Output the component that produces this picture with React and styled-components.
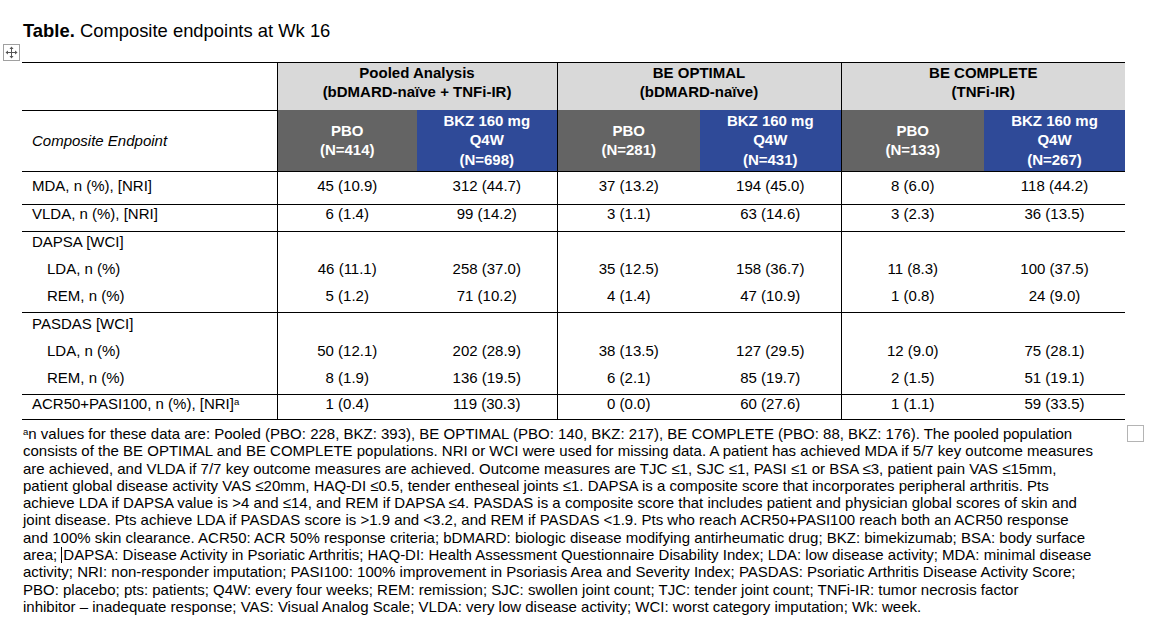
import React from "react";
import styled, { createGlobalStyle } from "styled-components";

const Global = createGlobalStyle`
  html, body { margin: 0; padding: 0; background: #ffffff; }
  body { font-family: "Liberation Sans", Arial, sans-serif; color: #000; }
`;

const Page = styled.div`
  padding: 20px 0 0 22px;
  width: 1145px;
`;

const Title = styled.div`
  font-size: 18.4px;
  line-height: 21px;
  padding-left: 1px;
  margin-bottom: 21px;
  b { font-weight: 700; }
`;

const TableWrap = styled.div`
  position: relative;
  width: 1103px;
`;

const MoveHandle = styled.div`
  position: absolute;
  left: -19px;
  top: -18px;
  width: 15px;
  height: 15px;
  border: 1px solid #a0a0a0;
  background: #fff;
  display: flex;
  align-items: center;
  justify-content: center;
`;

const Table = styled.table`
  border-collapse: collapse;
  table-layout: fixed;
  width: 1103px;
  font-size: 15px;
  border-top: 1px solid #000;
  border-bottom: 1px solid #000;
`;

const GroupHead = styled.th`
  background: #d9d9d9;
  font-weight: 700;
  font-size: 15px;
  line-height: 19px;
  text-align: center;
  vertical-align: top;
  padding: 0 4px 9px;
  height: 38px;
  border-left: 1px solid #000;
`;

const BlankHead = styled.th`
  border-bottom: 1px solid #000;
  padding: 0;
`;

const ArmHead = styled.th`
  background: ${(p) => (p.$blue ? "#2f4a98" : "#646464")};
  color: #fff;
  font-weight: 700;
  font-size: 15px;
  line-height: 19.5px;
  text-align: center;
  vertical-align: middle;
  padding: 0 4px 1px;
  height: 60px;
  border-left: ${(p) => (p.$first ? "1px solid #000" : "none")};
  border-bottom: 1px solid #000;
`;

const EndpointHead = styled.th`
  font-style: italic;
  font-weight: 400;
  text-align: left;
  padding: 0 0 0 10px;
  vertical-align: middle;
  border-bottom: 1px solid #000;
`;

const Row = styled.tr`
  border-bottom: ${(p) => (p.$line ? "1px solid #000" : "none")};
`;

const Label = styled.td`
  text-align: left;
  line-height: 17px;
  padding: ${(p) => p.$pt}px 0 ${(p) => p.$pb}px ${(p) => (p.$indent ? 25 : 10)}px;
  vertical-align: top;
  white-space: nowrap;
`;

const Value = styled.td`
  text-align: center;
  line-height: 17px;
  padding: ${(p) => p.$pt}px 0 ${(p) => p.$pb}px;
  vertical-align: top;
  border-left: ${(p) => (p.$first ? "1px solid #000" : "none")};
`;

const Sup = styled.sup`
  font-size: 9.5px;
  line-height: 0;
  vertical-align: 4px;
`;

const FootRow = styled.div`
  display: flex;
  align-items: flex-start;
  margin-top: 5px;
`;

const Footnote = styled.div`
  width: 1105px;
  font-size: 15px;
  line-height: 17.3px;
  padding-left: 1px;
  box-sizing: border-box;
`;

const FootLine = styled.div`
  white-space: nowrap;
`;

const EndMark = styled.div`
  width: 15px;
  height: 15px;
  border: 1px solid #b4b4b4;
  margin-top: 0px;
  flex: none;
`;

const Caret = styled.span`
  display: inline-block;
  width: 1px;
  height: 16px;
  background: #000;
  vertical-align: -3px;
  margin-right: 1px;
`;

const groups = [
  { name: "Pooled Analysis", sub: "(bDMARD-naïve + TNFi-IR)", pbo: "414", bkz: "698" },
  { name: "BE OPTIMAL", sub: "(bDMARD-naïve)", pbo: "281", bkz: "431" },
  { name: "BE COMPLETE", sub: "(TNFi-IR)", pbo: "133", bkz: "267" },
];

const rows = [
  { label: "MDA, n (%), [NRI]", v: ["45 (10.9)", "312 (44.7)", "37 (13.2)", "194 (45.0)", "8 (6.0)", "118 (44.2)"], pt: 5, pb: 10, line: true },
  { label: "VLDA, n (%), [NRI]", v: ["6 (1.4)", "99 (14.2)", "3 (1.1)", "63 (14.6)", "3 (2.3)", "36 (13.5)"], pt: 0, pb: 9, line: true },
  { label: "DAPSA [WCI]", v: ["", "", "", "", "", ""], pt: 1, pb: 9 },
  { label: "LDA, n (%)", indent: true, v: ["46 (11.1)", "258 (37.0)", "35 (12.5)", "158 (36.7)", "11 (8.3)", "100 (37.5)"], pt: 1, pb: 9 },
  { label: "REM, n (%)", indent: true, v: ["5 (1.2)", "71 (10.2)", "4 (1.4)", "47 (10.9)", "1 (0.8)", "24 (9.0)"], pt: 1, pb: 8, line: true },
  { label: "PASDAS [WCI]", v: ["", "", "", "", "", ""], pt: 2, pb: 9 },
  { label: "LDA, n (%)", indent: true, v: ["50 (12.1)", "202 (28.9)", "38 (13.5)", "127 (29.5)", "12 (9.0)", "75 (28.1)"], pt: 1, pb: 9 },
  { label: "REM, n (%)", indent: true, v: ["8 (1.9)", "136 (19.5)", "6 (2.1)", "85 (19.7)", "2 (1.5)", "51 (19.1)"], pt: 1, pb: 8, line: true },
  { label: "ACR50+PASI100, n (%), [NRI]", sup: true, v: ["1 (0.4)", "119 (30.3)", "0 (0.0)", "60 (27.6)", "1 (1.1)", "59 (33.5)"], pt: 0, pb: 7 },
];

const MoveIcon = () => (
  <svg width="13" height="13" viewBox="0 0 13 13" fill="#555">
    <path d="M6.5 0.5 L8.5 3 L4.5 3 Z" />
    <path d="M6.5 12.5 L8.5 10 L4.5 10 Z" />
    <path d="M0.5 6.5 L3 4.5 L3 8.5 Z" />
    <path d="M12.5 6.5 L10 4.5 L10 8.5 Z" />
    <rect x="6" y="2.5" width="1" height="8" />
    <rect x="2.5" y="6" width="8" height="1" />
  </svg>
);

const lines = [
  "n values for these data are: Pooled (PBO: 228, BKZ: 393), BE OPTIMAL (PBO: 140, BKZ: 217), BE COMPLETE (PBO: 88, BKZ: 176). The pooled population",
  "consists of the BE OPTIMAL and BE COMPLETE populations. NRI or WCI were used for missing data. A patient has achieved MDA if 5/7 key outcome measures",
  "are achieved, and VLDA if 7/7 key outcome measures are achieved. Outcome measures are TJC ≤1, SJC ≤1, PASI ≤1 or BSA ≤3, patient pain VAS ≤15mm,",
  "patient global disease activity VAS ≤20mm, HAQ-DI ≤0.5, tender entheseal joints ≤1. DAPSA is a composite score that incorporates peripheral arthritis. Pts",
  "achieve LDA if DAPSA value is >4 and ≤14, and REM if DAPSA ≤4. PASDAS is a composite score that includes patient and physician global scores of skin and",
  "joint disease. Pts achieve LDA if PASDAS score is >1.9 and <3.2, and REM if PASDAS <1.9. Pts who reach ACR50+PASI100 reach both an ACR50 response",
  "and 100% skin clearance. ACR50: ACR 50% response criteria; bDMARD: biologic disease modifying antirheumatic drug; BKZ: bimekizumab; BSA: body surface",
  "DAPSA: Disease Activity in Psoriatic Arthritis; HAQ-DI: Health Assessment Questionnaire Disability Index; LDA: low disease activity; MDA: minimal disease",
  "activity; NRI: non-responder imputation; PASI100: 100% improvement in Psoriasis Area and Severity Index; PASDAS: Psoriatic Arthritis Disease Activity Score;",
  "PBO: placebo; pts: patients; Q4W: every four weeks; REM: remission; SJC: swollen joint count; TJC: tender joint count; TNFi-IR: tumor necrosis factor",
  "inhibitor – inadequate response; VAS: Visual Analog Scale; VLDA: very low disease activity; WCI: worst category imputation; Wk: week.",
];

export default function App() {
  return (
    <>
      <Global />
      <Page>
        <Title>
          <b>Table.</b> Composite endpoints at Wk 16
        </Title>
        <TableWrap>
          <MoveHandle>
            <MoveIcon />
          </MoveHandle>
          <Table>
            <colgroup>
              <col style={{ width: 255 }} />
              <col style={{ width: 140 }} />
              <col style={{ width: 140 }} />
              <col style={{ width: 143 }} />
              <col style={{ width: 141 }} />
              <col style={{ width: 143 }} />
              <col style={{ width: 141 }} />
            </colgroup>
            <thead>
              <tr>
                <BlankHead />
                {groups.map((g) => (
                  <GroupHead key={g.name} colSpan={2}>
                    {g.name}
                    <br />
                    {g.sub}
                  </GroupHead>
                ))}
              </tr>
              <tr>
                <EndpointHead>Composite Endpoint</EndpointHead>
                {groups.map((g) => (
                  <React.Fragment key={g.name}>
                    <ArmHead $first>
                      PBO
                      <br />
                      (N={g.pbo})
                    </ArmHead>
                    <ArmHead $blue>
                      BKZ 160 mg
                      <br />
                      Q4W
                      <br />
                      (N={g.bkz})
                    </ArmHead>
                  </React.Fragment>
                ))}
              </tr>
            </thead>
            <tbody>
              {rows.map((r, i) => (
                <Row key={i} $line={r.line}>
                  <Label $pt={r.pt} $pb={r.pb} $indent={r.indent}>
                    {r.label}
                    {r.sup && <Sup>a</Sup>}
                  </Label>
                  {r.v.map((v, j) => (
                    <Value key={j} $pt={r.pt} $pb={r.pb} $first={j % 2 === 0}>
                      {v}
                    </Value>
                  ))}
                </Row>
              ))}
            </tbody>
          </Table>
        </TableWrap>
        <FootRow>
          <Footnote>
            {lines.map((l, i) => (
              <FootLine key={i}>
                {i === 0 && <Sup>a</Sup>}
                {i === 7 && (
                  <>
                    area; <Caret />
                  </>
                )}
                {l}
              </FootLine>
            ))}
          </Footnote>
          <EndMark />
        </FootRow>
      </Page>
    </>
  );
}
